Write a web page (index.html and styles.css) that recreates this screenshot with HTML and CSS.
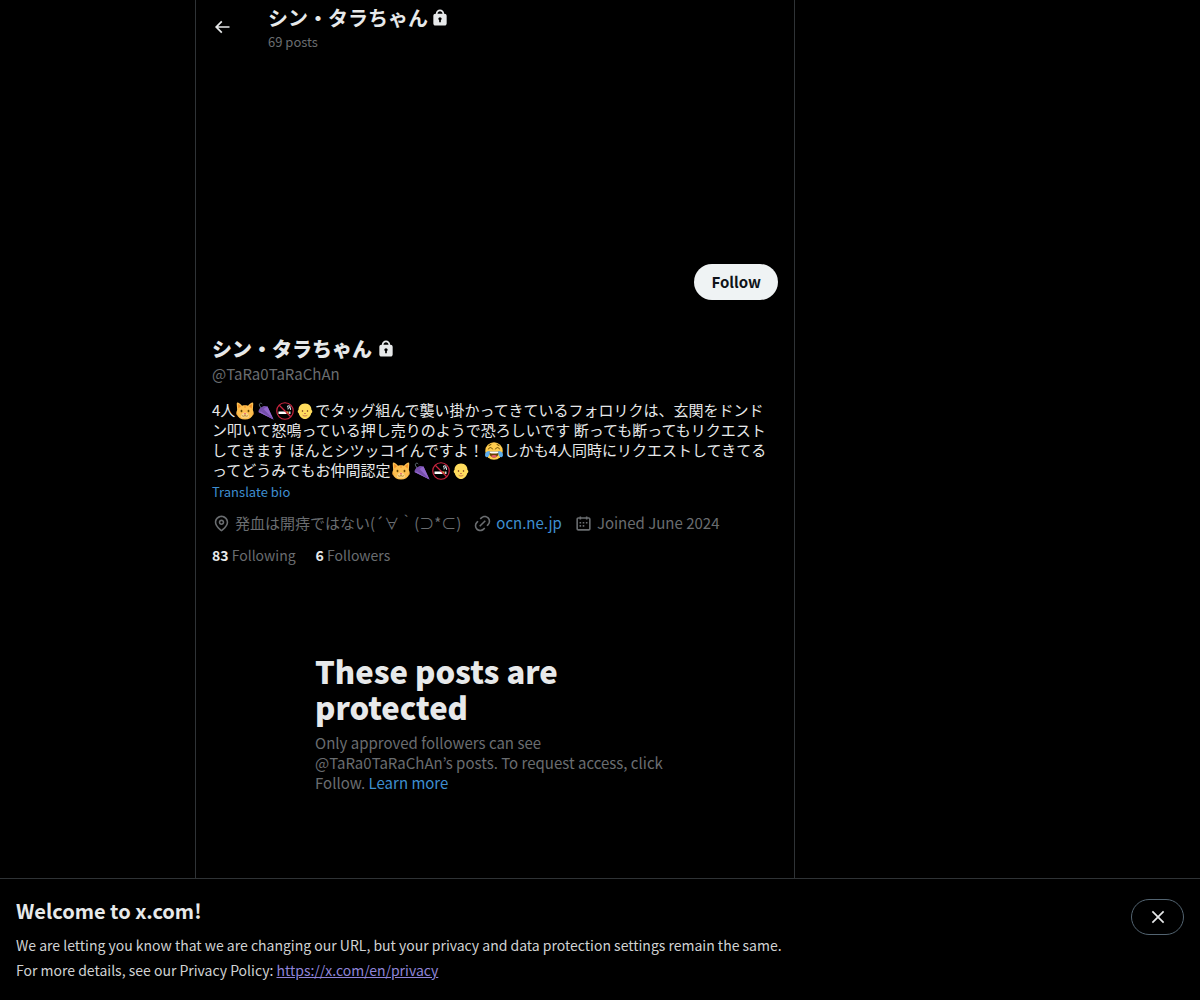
FILE: index.html
```html
<!DOCTYPE html>
<html lang="en">
<head>
    <meta charset="UTF-8">
    <meta name="viewport" content="width=device-width, initial-scale=1.0">
    <title>シン・タラちゃん (@TaRa0TaRaChAn) / X</title>
    <link rel="stylesheet" href="styles.css">
</head>
<body>
    <!-- shared icons and emoji -->
    <svg class="sprite" aria-hidden="true">
        <symbol id="lock" viewBox="0 0 24 24">
            <path d="M17.5 7H17v-.25c0-2.76-2.24-5-5-5s-5 2.24-5 5V7h-.5C5.12 7 4 8.12 4 9.5v9C4 19.88 5.12 21 6.5 21h11c1.38 0 2.5-1.12 2.5-2.5v-9C20 8.12 18.88 7 17.5 7zM13 14.73V17h-2v-2.27c-.59-.34-1-.99-1-1.73 0-1.1.9-2 2-2 1.11 0 2 .9 2 2 0 .74-.4 1.39-1 1.73zM15 7H9v-.25c0-1.66 1.35-3 3-3 1.66 0 3 1.34 3 3V7z"/>
        </symbol>
        <symbol id="cat" viewBox="0 0 36 36">
            <path fill="#fdbf4f" d="M3 1c-1 0-1.500 1-1.500 3l.8 12C.8 19 0 22 1.500 25 4 31 10 35 18 35s14-4 16.500-10c1.500-3 .7-6-.8-9l.8-12c0-2-.5-3-1.500-3-2 0-6.500 3.500-9 6.500-4-1.200-8-1.200-12 0C9.500 4.500 5 1 3 1z"/>
            <path fill="#f18f26" d="M4 4l.8 9L10 8.500C8 6.500 6 5 4 4zm28 0l-.8 9L26 8.500c2-2 4-3.500 6-4.500zM17 7h2v5h-2zM0 23l6 1-5 1zm36 0l-6 1 5 1z"/>
            <ellipse cx="11" cy="18" rx="1.800" ry="2.500" fill="#664500"/>
            <ellipse cx="25" cy="18" rx="1.800" ry="2.500" fill="#664500"/>
            <path fill="#fdd888" d="M18 21c-5 1-9 4-8 8 1 3 5 3 8 2 3 1 7 1 8-2 1-4-3-7-8-8z"/>
            <path fill="#e75a70" d="M15.500 22h5L18 25z"/>
            <path fill="none" stroke="#8a5a10" stroke-width="1.200" stroke-linecap="round" d="M18 25v2M12 27c2 2 4 2 6 0 2 2 4 2 6 0"/>
        </symbol>
        <symbol id="umbrella" viewBox="0 0 36 36">
            <path fill="none" stroke="#66757f" stroke-width="2" stroke-linecap="round" d="M11 13L7.500 8C5 4 9 0 12 3.500"/>
            <path fill="#744eaa" d="M5 20c0-4 2-7 5-9 3-3 8-4 13-2L35 35z"/>
            <path fill="#9266cc" d="M5 20c2-1.500 4-1.500 6 0 .5-3 2-4.500 5-5 0-2.500 3-5 7-6L35 35z"/>
            <path fill="#744eaa" d="M11 20L35 35 16 15c-3 .5-4.500 2-5 5z"/>
        </symbol>
        <symbol id="no-smoking" viewBox="0 0 36 36">
            <path fill="#fff" d="M5 19h16v5H5z"/>
            <path fill="#ffcc4d" d="M21 19h4v5h-4z"/>
            <path fill="#ccd6dd" d="M26 19h3v5h-3z"/>
            <path fill="none" stroke="#ccd6dd" stroke-width="2.200" stroke-linecap="round" d="M23 10c0-4 6-3 5 0-.5 2-4 1-4 4M29 15v-3"/>
            <circle cx="18" cy="18" r="16.500" fill="none" stroke="#cc2640" stroke-width="2.400"/>
            <path stroke="#cc2640" stroke-width="2.400" d="M6.500 6.500l23 23"/>
        </symbol>
        <symbol id="bald" viewBox="0 0 36 36">
            <path fill="#ffdc5d" d="M18 3C9 3 5 9 5 16c-2 .5-2.500 5 .5 6.500C7 29 12 34 18 34s11-5 12.500-11.500c3-1.500 2.500-6 .5-6.500 0-7-4-13-13-13z"/>
            <circle cx="13" cy="18" r="1.500" fill="#662113"/>
            <circle cx="23" cy="18" r="1.500" fill="#662113"/>
            <path fill="none" stroke="#c1694f" stroke-width="1.800" stroke-linecap="round" d="M17 23h2M14 27c2 1.500 6 1.500 8 0"/>
        </symbol>
        <symbol id="joy" viewBox="0 0 36 36">
            <circle cx="18" cy="18" r="17.500" fill="#ffcc4d"/>
            <path fill="none" stroke="#664500" stroke-width="2" stroke-linecap="round" d="M7 14c1.500-4 6-4 8 0M21 14c2-4 6.500-4 8 0M8 7l4-2M28 7l-4-2"/>
            <path fill="#664500" d="M8 19h20c0 7-4 12-10 12S8 26 8 19z"/>
            <path fill="#fff" d="M9 19h18v3c-5 1.500-13 1.500-18 0z"/>
            <path fill="#e75a70" d="M12 28c3-3 9-3 12 0-3 4-9 4-12 0z"/>
            <path fill="#5dadec" d="M9 18c-5 0-9 3-9 8 0 3 2 5 5 4 4-1 5-7 4-12zm18 0c5 0 9 3 9 8 0 3-2 5-5 4-4-1-5-7-4-12z"/>
        </symbol>
    </svg>

    <div class="page">
        <main class="column">
            <header class="topbar">
                <button class="back" type="button" aria-label="Back">
                    <svg class="icon" viewBox="0 0 24 24"><path d="M7.414 13l5.043 5.040-1.414 1.420L3.586 12l7.457-7.460 1.414 1.420L7.414 11H21v2H7.414z"/></svg>
                </button>
                <div class="title">
                    <h2 class="name">シン・タラちゃん <svg class="icon" role="img" aria-label="Protected account"><use href="#lock"/></svg></h2>
                    <div class="post-count">69 posts</div>
                </div>
            </header>

            <div class="cover"></div>

            <section class="profile">
                <div class="actions">
                    <button class="follow" type="button">Follow</button>
                </div>
                <h1 class="name">シン・タラちゃん <svg class="icon" role="img" aria-label="Protected account"><use href="#lock"/></svg></h1>
                <div class="handle">@TaRa0TaRaChAn</div>
                <p class="bio">4人<svg class="emoji"><use href="#cat"/></svg><svg class="emoji"><use href="#umbrella"/></svg><svg class="emoji"><use href="#no-smoking"/></svg><svg class="emoji"><use href="#bald"/></svg>でタッグ組んで襲い掛かってきているフォロリクは、玄関をドンドン叩いて怒鳴っている押し売りのようで恐ろしいです 断っても断ってもリクエストしてきます ほんとシツッコイんですよ！<svg class="emoji"><use href="#joy"/></svg>しかも4人同時にリクエストしてきてるってどうみてもお仲間認定<svg class="emoji"><use href="#cat"/></svg><svg class="emoji"><use href="#umbrella"/></svg><svg class="emoji"><use href="#no-smoking"/></svg><svg class="emoji"><use href="#bald"/></svg></p>
                <button class="translate" type="button">Translate bio</button>

                <div class="meta">
                    <span class="meta-item">
                        <svg class="icon" viewBox="0 0 24 24"><path d="M12 7c-1.930 0-3.500 1.570-3.500 3.500S10.070 14 12 14s3.500-1.570 3.500-3.500S13.930 7 12 7zm0 5c-.827 0-1.500-.673-1.500-1.500S11.173 9 12 9s1.500.673 1.500 1.500S12.827 12 12 12zm0-10c-4.687 0-8.500 3.813-8.500 8.500 0 5.967 7.621 11.116 7.945 11.332l.555.370.555-.370c.324-.216 7.945-5.365 7.945-11.332C20.500 5.813 16.687 2 12 2zm0 17.770c-1.665-1.241-6.500-5.196-6.500-9.270C5.500 6.916 8.416 4 12 4s6.500 2.916 6.500 6.500c0 4.073-4.835 8.028-6.500 9.270z"/></svg>
                        発血は開痔ではない(´∀｀(⊃*⊂)
                    </span>
                    <span class="meta-item">
                        <svg class="icon" viewBox="0 0 24 24"><path d="M18.360 5.640c-1.950-1.960-5.110-1.960-7.070 0L9.880 7.050 8.460 5.640l1.420-1.420c2.730-2.730 7.160-2.730 9.900 0 2.730 2.740 2.730 7.170 0 9.900l-1.420 1.420-1.410-1.420 1.410-1.410c1.960-1.960 1.960-5.120 0-7.070zm-2.120 3.530l-7.070 7.070-1.410-1.410 7.070-7.070 1.410 1.410zm-12.020.710l1.420-1.420 1.410 1.420-1.410 1.410c-1.960 1.960-1.960 5.120 0 7.070 1.950 1.960 5.110 1.960 7.070 0l1.410-1.410 1.420 1.410-1.420 1.420c-2.730 2.730-7.160 2.730-9.900 0-2.730-2.740-2.730-7.170 0-9.900z"/></svg>
                        <a class="link" href="#">ocn.ne.jp</a>
                    </span>
                    <span class="meta-item">
                        <svg class="icon" viewBox="0 0 24 24"><path d="M7 4V3h2v1h6V3h2v1h1.500C19.890 4 21 5.120 21 6.500v12c0 1.380-1.110 2.500-2.500 2.500h-13C4.120 21 3 19.880 3 18.500v-12C3 5.120 4.120 4 5.500 4H7zm0 2H5.500c-.270 0-.5.220-.5.500v12c0 .280.230.500.5.500h13c.280 0 .5-.220.5-.500v-12c0-.280-.220-.500-.5-.500H17v1h-2V6H9v1H7V6zm0 6h2v-2H7v2zm0 4h2v-2H7v2zm4-4h2v-2h-2v2zm0 4h2v-2h-2v2zm4-4h2v-2h-2v2z"/></svg>
                        Joined June 2024
                    </span>
                </div>

                <div class="stats">
                    <a href="#"><strong>83</strong> Following</a>
                    <a href="#"><strong>6</strong> Followers</a>
                </div>
            </section>

            <section class="protected">
                <h2>These posts are protected</h2>
                <p>Only approved followers can see @TaRa0TaRaChAn’s posts. To request access, click Follow. <a class="link" href="#">Learn more</a></p>
            </section>
        </main>
    </div>

    <footer class="notice">
        <div>
            <h2>Welcome to x.com!</h2>
            <p>We are letting you know that we are changing our URL, but your privacy and data protection settings remain the same.<br>
            For more details, see our Privacy Policy: <a href="https://x.com/en/privacy">https://x.com/en/privacy</a></p>
        </div>
        <button class="close" type="button" aria-label="Close">
            <svg class="icon" viewBox="0 0 24 24"><path d="M10.590 12L4.540 5.960l1.420-1.420L12 10.590l6.040-6.050 1.420 1.420L13.410 12l6.050 6.040-1.420 1.420L12 13.410l-6.040 6.050-1.420-1.420L10.590 12z"/></svg>
        </button>
    </footer>
</body>
</html>
```

FILE: styles.css
```css
* {
    box-sizing: border-box;
}
body {
    margin: 0;
    min-height: 100vh;
    display: flex;
    flex-direction: column;
    background-color: #000;
    color: #e7e9ea;
    font-family: "Noto Sans CJK JP", sans-serif;
    font-size: 15px;
    line-height: 20px;
}
h1, h2, p {
    margin: 0;
}
button {
    font: inherit;
    color: inherit;
    background: none;
    border: none;
    padding: 0;
    cursor: pointer;
}
a {
    color: inherit;
    text-decoration: none;
}
.sprite {
    display: none;
}
.icon {
    width: 20px;
    height: 20px;
    flex-shrink: 0;
    fill: currentColor;
}
.emoji {
    width: 18px;
    height: 18px;
    margin: 0 1px;
    vertical-align: -4px;
}
.link {
    color: #3e8ed0;
}

/* profile column */
.page {
    flex: 1;
    display: grid;
    grid-template-columns: 13fr minmax(0, 600px) 27fr;
}
.column {
    grid-column: 2;
    border: solid #2f3336;
    border-width: 0 1px;
}
.topbar {
    display: flex;
    align-items: center;
    height: 53px;
    padding: 0 16px;
    gap: 36px;
}
.back {
    display: flex;
}
.title {
    padding-top: 4px;
}
.name {
    display: flex;
    align-items: center;
    gap: 2px;
    font-size: 20px;
    font-weight: 700;
    line-height: 24px;
}
h1.name {
    gap: 4px;
    font-weight: 800;
}
.post-count {
    margin-top: 2px;
    color: #6a6d70;
    font-size: 13px;
    line-height: 20px;
}
.cover {
    height: 199px;
}
.profile {
    padding: 12px 16px;
}
.actions {
    display: flex;
    justify-content: flex-end;
    margin-bottom: 37px;
}
.follow {
    height: 36px;
    padding: 0 17px;
    border-radius: 18px;
    background-color: #eff3f4;
    color: #0f1419;
    font-weight: 700;
}
.handle {
    margin-top: 3px;
    color: #6a6d70;
}
.bio {
    margin-top: 16px;
}
.translate {
    display: block;
    margin-top: 4px;
    color: #3e8ed0;
    font-size: 13px;
    line-height: 16px;
}
.meta {
    display: flex;
    flex-wrap: wrap;
    gap: 4px 12px;
    margin-top: 13px;
    color: #6a6d70;
}
.meta-item {
    display: flex;
    align-items: center;
    gap: 4px;
}
.meta .icon {
    width: 19px;
    height: 19px;
}
.stats {
    display: flex;
    gap: 20px;
    margin-top: 12px;
    color: #6a6d70;
    font-size: 14px;
}
.stats strong {
    color: #e7e9ea;
}

/* protected account message */
.protected {
    max-width: 360px;
    margin: 76px auto 64px;
}
.protected h2 {
    margin-bottom: 8px;
    font-size: 31px;
    font-weight: 800;
    line-height: 36px;
}
.protected p {
    color: #6a6d70;
}

/* bottom notice */
.notice {
    display: flex;
    justify-content: space-between;
    align-items: flex-start;
    padding: 20px 16px 17px;
    border-top: 1px solid #2f3336;
}
.notice h2 {
    margin-bottom: 10px;
    font-size: 20px;
    line-height: 24px;
}
.notice p {
    color: #d0d2d3;
    font-size: 14px;
    line-height: 25px;
}
.notice a {
    color: #8f84d8;
    text-decoration: underline;
}
.close {
    display: flex;
    align-items: center;
    justify-content: center;
    flex-shrink: 0;
    width: 53px;
    height: 36px;
    border: 1px solid #536471;
    border-radius: 18px;
}
```
